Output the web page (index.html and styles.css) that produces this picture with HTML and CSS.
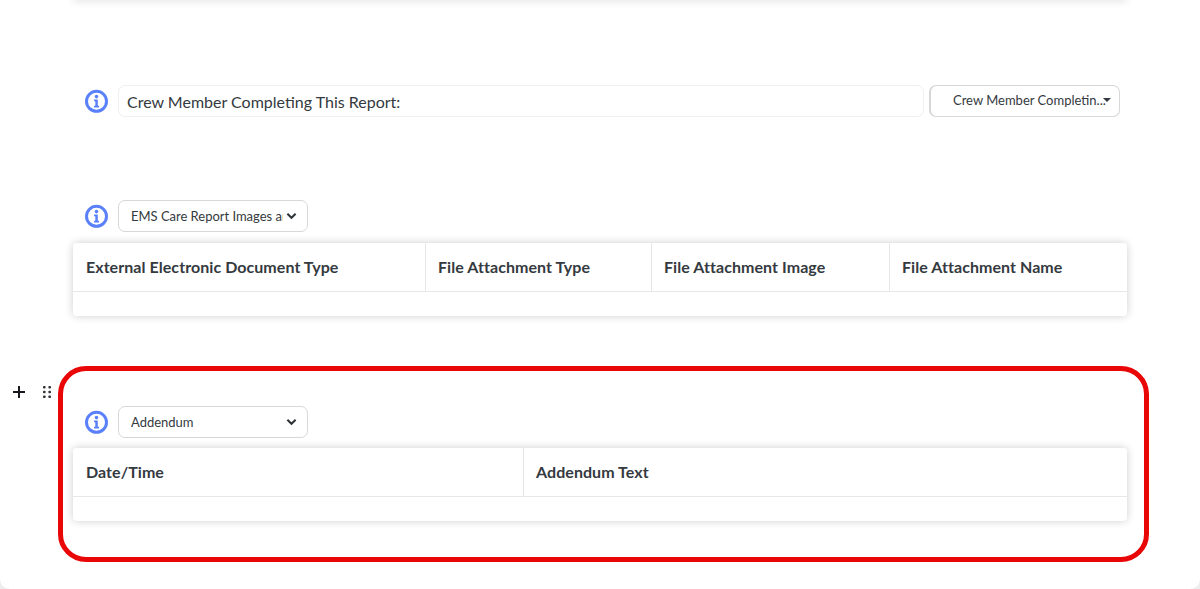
FILE: index.html
```html
<!DOCTYPE html>
<html lang="en">
<head>
<meta charset="utf-8">
<title>Report</title>
<link rel="stylesheet" href="styles.css">
</head>
<body>
<main class="page">
  <div class="top-card"></div>

  <section class="field-row first-row">
    <svg class="info" viewBox="0 0 24 24"><circle cx="12.5" cy="12.3" r="10" fill="none" stroke="#5a80fb" stroke-width="3"/><circle cx="12.5" cy="7.6" r="1.8" fill="#5a80fb"/><path d="M10 10.6h3.8v6.2h1.3v1.6H10v-1.6h1.3v-4.6H10z" fill="#5a80fb"/></svg>
    <div class="text-input">Crew Member Completing This Report:</div>
    <div class="dropdown"><span class="dropdown-label">Crew Member Completin...</span><span class="caret"></span></div>
  </section>

  <section class="table-block second-block">
    <div class="field-row">
      <svg class="info" viewBox="0 0 24 24"><circle cx="12.5" cy="12.3" r="10" fill="none" stroke="#5a80fb" stroke-width="3"/><circle cx="12.5" cy="7.6" r="1.8" fill="#5a80fb"/><path d="M10 10.6h3.8v6.2h1.3v1.6H10v-1.6h1.3v-4.6H10z" fill="#5a80fb"/></svg>
      <div class="select"><span class="select-text">EMS Care Report Images and Files</span><svg class="chevron" viewBox="0 0 12 8"><path d="M1.5 1.5 6 6l4.5-4.5" fill="none" stroke="#2f3338" stroke-width="2.2"/></svg></div>
    </div>
    <div class="table">
      <div class="thead">
        <div class="th col-a">External Electronic Document Type</div>
        <div class="th col-b">File Attachment Type</div>
        <div class="th col-c">File Attachment Image</div>
        <div class="th col-d">File Attachment Name</div>
      </div>
      <div class="tbody"></div>
    </div>
  </section>

  <section class="highlight">
    <div class="block-tools">
      <svg class="plus" viewBox="0 0 12 12"><path d="M6 0v12M0 6h12" stroke="#16181b" stroke-width="2"/></svg>
      <svg class="grip" viewBox="0 0 8 12"><g fill="#33363a"><rect x="0" y="0" width="2.6" height="2.6" rx="0.8"/><rect x="5.4" y="0" width="2.6" height="2.6" rx="0.8"/><rect x="0" y="4.7" width="2.6" height="2.6" rx="0.8"/><rect x="5.4" y="4.7" width="2.6" height="2.6" rx="0.8"/><rect x="0" y="9.4" width="2.6" height="2.6" rx="0.8"/><rect x="5.4" y="9.4" width="2.6" height="2.6" rx="0.8"/></g></svg>
    </div>
    <div class="field-row">
      <svg class="info" viewBox="0 0 24 24"><circle cx="12.5" cy="12.3" r="10" fill="none" stroke="#5a80fb" stroke-width="3"/><circle cx="12.5" cy="7.6" r="1.8" fill="#5a80fb"/><path d="M10 10.6h3.8v6.2h1.3v1.6H10v-1.6h1.3v-4.6H10z" fill="#5a80fb"/></svg>
      <div class="select"><span class="select-text">Addendum</span><svg class="chevron" viewBox="0 0 12 8"><path d="M1.5 1.5 6 6l4.5-4.5" fill="none" stroke="#2f3338" stroke-width="2.2"/></svg></div>
    </div>
    <div class="table">
      <div class="thead">
        <div class="th col-date">Date/Time</div>
        <div class="th col-text">Addendum Text</div>
      </div>
      <div class="tbody"></div>
    </div>
  </section>
</main>
</body>
</html>
```
FILE: styles.css
```css
* { box-sizing: border-box; }
html, body { margin: 0; height: 100%; }
body {
  background: #eeeeee;
  overflow: hidden;
  font-family: Lato, "Open Sans", sans-serif;
  color: #343a40;
}
.page {
  height: 589px;
  width: 1200px;
  background: #fff;
  border-radius: 0 0 10px 10px;
  padding: 0 73px;
  overflow: hidden;
}
.top-card {
  height: 4px;
  margin-top: -4px;
  background: #fff;
  box-shadow: 0 0 9px rgba(0, 0, 0, 0.2);
}
.field-row {
  display: flex;
  align-items: center;
  height: 32px;
  padding-left: 11px;
}
.first-row { margin-top: 85px; }
.info {
  width: 24px;
  height: 24px;
  flex: none;
  margin-right: 10px;
}
.text-input {
  width: 806px;
  height: 32px;
  border: 1px solid #eef0f2;
  border-radius: 7px;
  padding: 0 8px;
  font-size: 16px;
  line-height: 31px;
  color: #343a40;
  flex: none;
}
.dropdown {
  width: 191px;
  height: 32px;
  margin-left: 5px;
  border: 1px solid #d5d7d9;
  border-left-width: 2px;
  border-radius: 7px;
  display: flex;
  align-items: center;
  padding: 0 0 2px 22px;
  font-size: 13px;
  white-space: nowrap;
  flex: none;
}
.dropdown-label { width: 153px; overflow: hidden; }
.caret {
  width: 0;
  height: 0;
  border-left: 4px solid transparent;
  border-right: 4px solid transparent;
  border-top: 4px solid #343a40;
  margin-left: -3px;
}
.select {
  width: 190px;
  height: 32px;
  border: 1px solid #d5d7d9;
  border-radius: 7px;
  display: flex;
  align-items: center;
  padding-left: 12px;
  font-size: 13px;
  flex: none;
}
.select-text {
  width: 152px;
  overflow: hidden;
  white-space: nowrap;
  letter-spacing: -0.02px;
  flex: none;
}
.chevron { width: 11px; height: 8px; flex: none; margin-left: 3px; }
.second-block { margin-top: 83px; }
.table {
  margin-top: 11px;
  height: 73px;
  background: #fff;
  border-radius: 4px;
  box-shadow: 0 0 9px rgba(0, 0, 0, 0.2);
}
.thead {
  display: flex;
  height: 49px;
  border-bottom: 1px solid #e6e7e8;
}
.th {
  padding: 0 12px;
  font-size: 16px;
  font-weight: 700;
  line-height: 47px;
  letter-spacing: 0.06px;
  color: #343a40;
  border-left: 1px solid #e6e7e8;
  white-space: nowrap;
}
.th:first-child { border-left: 0; padding-left: 13px; }
.col-a { width: 352px; }
.col-b { width: 226px; }
.col-c { width: 238px; }
.col-d { flex: 1; }
.col-date { width: 450px; }
.col-text { flex: 1; }
.highlight {
  position: relative;
  margin: 50px 0 0 -15px;
  height: 196px;
  width: 1091px;
  border: 5px solid #e80606;
  border-radius: 28px;
  padding: 35px 17px 0 10px;
}
.highlight .table { width: 1054px; margin-top: 10px; }
.block-tools {
  position: absolute;
  left: -50px;
  top: 15px;
  display: flex;
  align-items: center;
  gap: 18px;
}
.plus { width: 12px; height: 12px; display: block; }
.grip { width: 8px; height: 12px; display: block; }
```
